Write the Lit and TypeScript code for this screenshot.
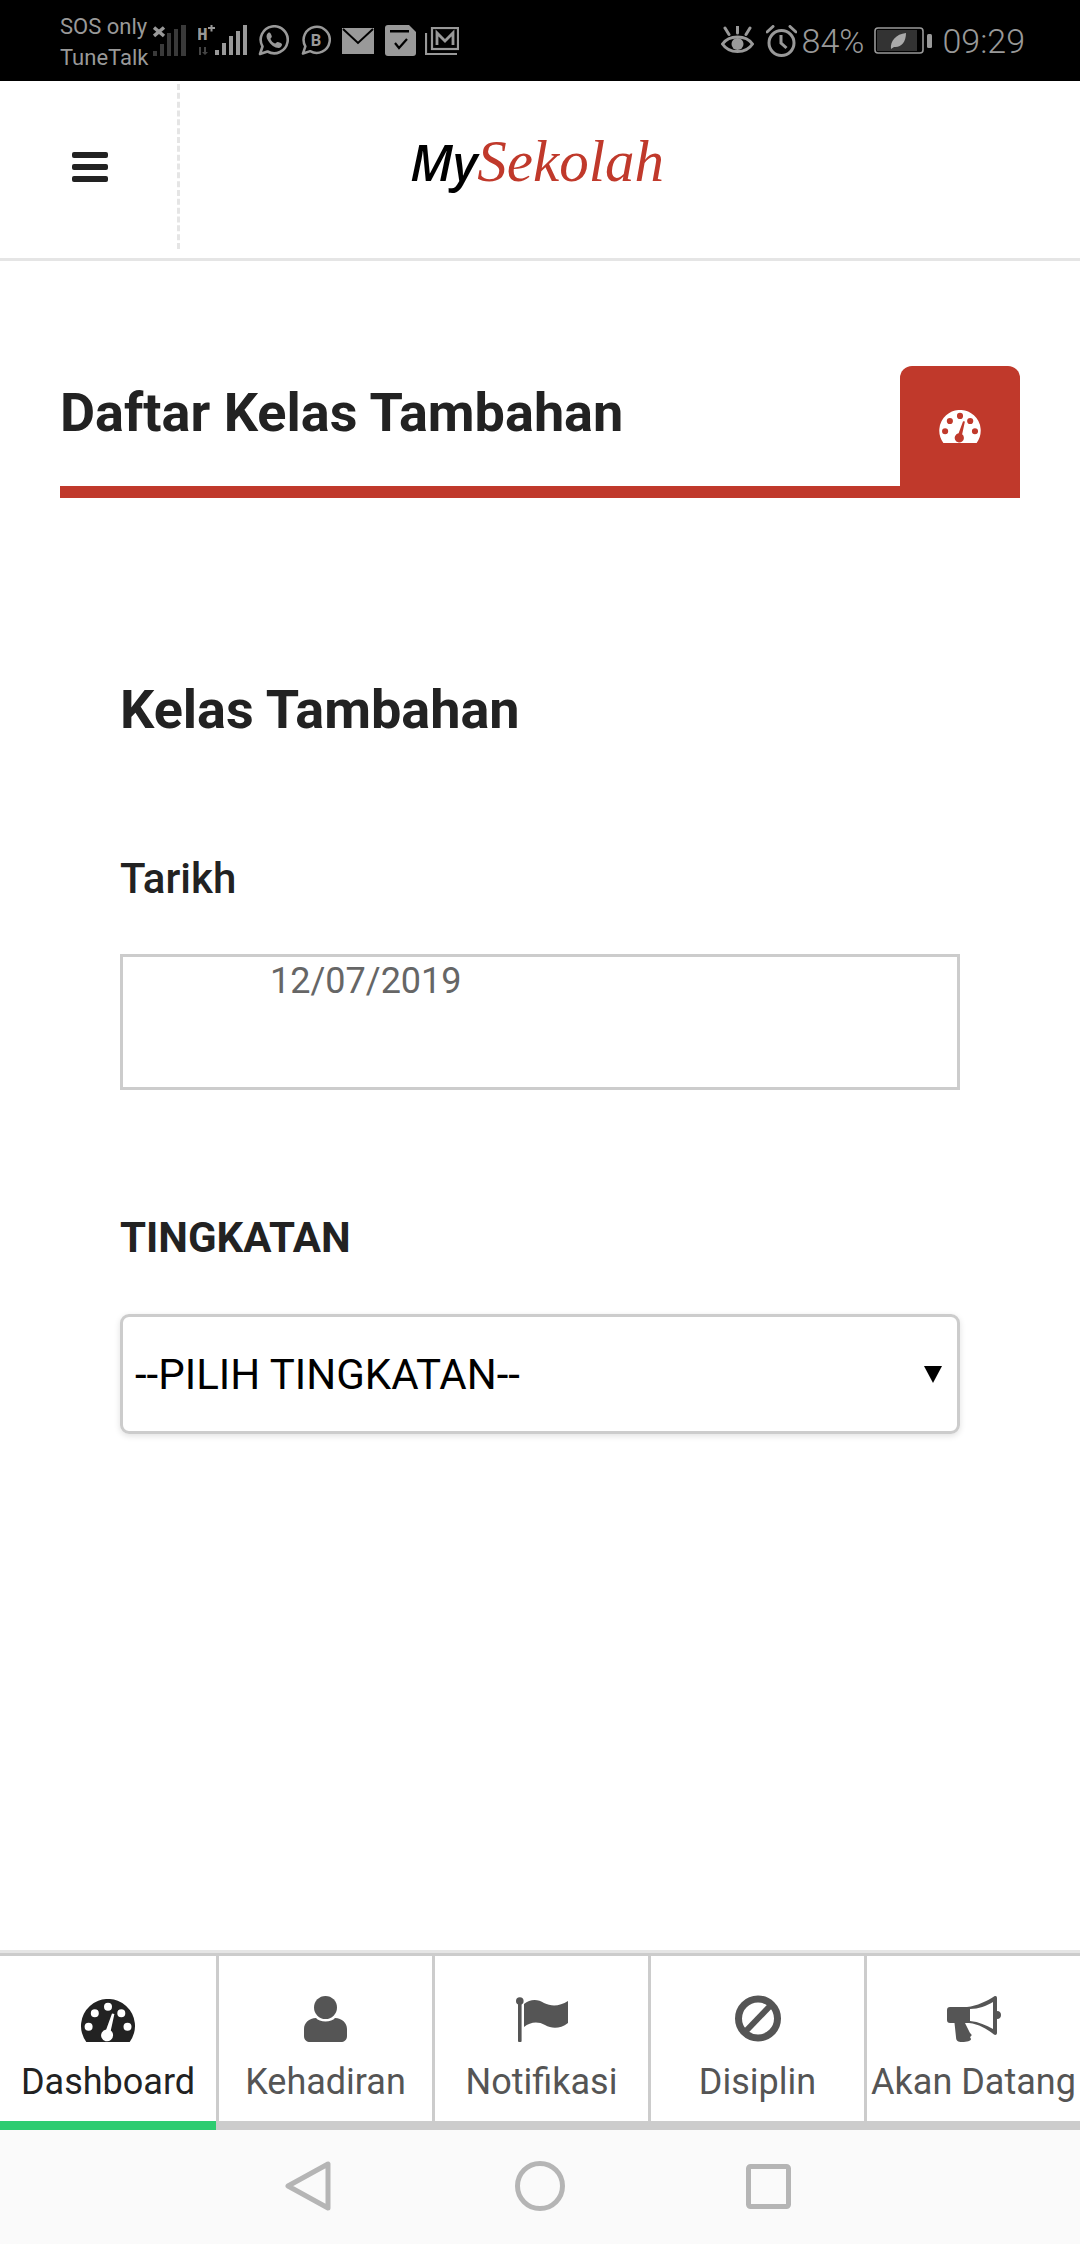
import { LitElement, html, css } from "lit";
import { customElement } from "lit/decorators.js";

const gauge = (w: number, h: number) => html`<svg width=${w} height=${h} viewBox="0 0 54 43" fill="currentColor"><path fill-rule="evenodd" d="M5.3 43A27 27 0 1 1 48.7 43ZM27 3.7a4 4 0 1 0 0 8a4 4 0 1 0 0-8ZM13.8 10.3a4 4 0 1 0 0 8a4 4 0 1 0 0-8ZM40.3 10.3a4 4 0 1 0 0 8a4 4 0 1 0 0-8ZM7.6 23.7a4 4 0 1 0 0 8a4 4 0 1 0 0-8ZM46.5 23.7a4 4 0 1 0 0 8a4 4 0 1 0 0-8ZM31 14.5L25.2 30.4a6 6 0 1 0 4.6 1.2L33.4 15Z"/></svg>`;

const tabs = [
  { label: "Dashboard", icon: gauge(54, 43), active: true },
  { label: "Kehadiran", icon: html`<svg width="43" height="46" viewBox="0 0 43 46" fill="currentColor"><circle cx="21.5" cy="11.5" r="11.5"/><path d="M12 22C15 26.500 28 26.500 31 22C38 22 43 27 43 33V40C43 44 40 46 37 46H6C3 46 0 44 0 40V33C0 27 5 22 12 22Z"/></svg>` },
  { label: "Notifikasi", icon: html`<svg width="52" height="45" viewBox="0 0 52 45" fill="currentColor"><circle cx="3.800" cy="4" r="3.800"/><rect x="2" y="5" width="3.600" height="40" rx="1"/><path d="M8 7C14 2 22 2 28 6C36 10 44 9 52 4V26C44 32 36 32 29 28C22 24 14 25 8 30Z"/></svg>` },
  { label: "Disiplin", icon: html`<svg width="46" height="47" viewBox="0 0 46 47" fill="none" stroke="currentColor"><circle cx="23" cy="23.500" r="19.500" stroke-width="7"/><path d="M10 37L36 10" stroke-width="6"/></svg>` },
  { label: "Akan Datang", icon: html`<svg width="54" height="46" viewBox="0 0 54 46" fill="currentColor"><path fill-rule="evenodd" d="M3 11H20C30 10 40 5 47 0.500C49 -0.500 50 0.500 50 2V15C53 15 54 17 54 19C54 21 53 23 50 23V37C50 39 48 39.500 47 38.500C40 33 32 28 22 27H18L23 37C24 38 26 39 23 41L24 43C24 45 20 46 15 46C11 46 9 45 9 41L7.500 27H3C1 27 0 26 0 24V14C0 12 1 11 3 11ZM23 13V25C32 26 39 29 46 33V6C39 10 32 13 23 13Z"/></svg>` },
];

const gray = "#999";

const statusLeft = [
  { cls: "g7", icon: html`<svg width="33" height="32" viewBox="0 0 33 32"><g fill="#3a3a3a"><rect x="0" y="26" width="4" height="5"/><rect x="7" y="19" width="4" height="12"/><rect x="14" y="8" width="4" height="23"/><rect x="21" y="4" width="4" height="27"/><rect x="28" y="0" width="5" height="31"/></g><path d="M1 2.500L11 11M11 2.500L1 11" stroke="${gray}" stroke-width="3.500"/></svg>` },
  { cls: "g12", icon: html`<svg width="49" height="32" viewBox="0 0 49 32"><g fill="${gray}"><text x="-1" y="15" class="hplus">H</text><rect x="10" y="2" width="7" height="2"/><rect x="12.500" y="0" width="2" height="6.500"/><rect x="17" y="25" width="4" height="5"/><rect x="24" y="18" width="4" height="12"/><rect x="31" y="11" width="4" height="19"/><rect x="38" y="6" width="4" height="24"/><rect x="45" y="0" width="4" height="30"/></g><g fill="#444"><rect x="1" y="22" width="2" height="8"/><path d="M6 22h2v5h2l-3 3-3-3h2z"/></g></svg>` },
  { cls: "g11", icon: html`<svg width="31" height="31" viewBox="0 0 31 31"><path d="M2 29L4.500 21.500A13.500 13.500 0 1 1 9.500 26.500Z" fill="none" stroke="${gray}" stroke-width="2.600" stroke-linejoin="round"/><path d="M10 8C8 10 8 12 10 15.500C12.500 20 17 23 20.500 23C22.500 23 24 21 24 19.500C24 18 20.500 17 19.500 17C18.500 17 18 18.500 17 18.500C15 18 13 15.500 12.500 14C12.500 13 14 12.500 13.800 11.500C13.500 10 12.500 7.500 11.500 7.500C11 7.500 10.500 7.500 10 8Z" fill="${gray}"/></svg>` },
  { cls: "g12", icon: html`<svg width="30" height="31" viewBox="0 0 31 31"><path d="M2 29L4.500 21.500A13.500 13.500 0 1 1 9.500 26.500Z" fill="none" stroke="${gray}" stroke-width="2.600" stroke-linejoin="round"/><text x="15.500" y="21" class="biz" text-anchor="middle" fill="${gray}">B</text></svg>` },
  { cls: "g11", icon: html`<svg width="32" height="26" viewBox="0 0 32 26"><rect width="32" height="26" fill="${gray}"/><path d="M1 1L16 15L31 1" fill="none" stroke="#000" stroke-width="2"/></svg>` },
  { cls: "g11", icon: html`<svg width="31" height="31" viewBox="0 0 31 31"><path d="M3 0H24L31 7V28C31 30 30 31 28 31H3C1 31 0 30 0 28V3C0 1 1 0 3 0Z" fill="${gray}"/><rect x="5" y="5" width="19" height="2.500" fill="#000"/><path d="M10 18L14 23L22 14" fill="none" stroke="#000" stroke-width="2.200"/></svg>` },
  { cls: "g9", icon: html`<svg width="34" height="28" viewBox="0 0 34 28" fill="none" stroke="${gray}" stroke-width="2.200"><path d="M1 6V27H32"/><rect x="7" y="1" width="26" height="21"/><path d="M12 18V6L20 14L28 6V18" stroke-width="2.800"/></svg>` },
];

@customElement("app-root")
export class AppRoot extends LitElement {
  static styles = css`
    :host {
      display: flex;
      flex-direction: column;
      width: 1080px;
      height: 2244px;
      background: #fff;
      color: #222;
      font-family: Roboto, "Liberation Sans", sans-serif;
      overflow: hidden;
    }
    .status {
      flex: none;
      height: 81px;
      background: #000;
      color: #999;
      display: flex;
      align-items: center;
      justify-content: space-between;
      padding: 0 55px 0 60px;
    }
    .status svg { display: block; flex: none; }
    .sgroup { display: flex; align-items: center; }
    .carrier {
      width: 86px;
      font-size: 22px;
      line-height: 31px;
      white-space: nowrap;
      font-weight: 400;
      margin-top: 2px;
    }
    .g5 { margin-left: 5px; }
    .g7 { margin-left: 7px; }
    .g9 { margin-left: 9px; }
    .g10 { margin-left: 10px; }
    .g11 { margin-left: 11px; }
    .g12 { margin-left: 12px; }
    .hplus { font: 700 18px "Liberation Mono", monospace; }
    .biz { font: 700 17px Roboto, sans-serif; }
    .stext { font-size: 34px; font-weight: 300; line-height: 40px; white-space: nowrap; }
    .header {
      flex: none;
      height: 180px;
      box-sizing: border-box;
      padding-top: 3px;
      border-bottom: 3px solid #e5e5e5;
      display: flex;
    }
    .menu {
      flex: none;
      box-sizing: border-box;
      width: 180px;
      height: 165px;
      border-right: 3px dashed #e5e5e5;
      padding-left: 72px;
      display: flex;
      flex-direction: column;
      justify-content: center;
      gap: 6px;
      margin-bottom: 10px;
    }
    .menu i { display: block; width: 36px; height: 6px; border-radius: 2px; background: #222; }
    .logo {
      flex: 1;
      display: flex;
      align-items: baseline;
      justify-content: center;
      padding: 42px 186px 0 0;
      font-family: "Liberation Serif", serif;
      font-style: italic;
      font-size: 59px;
      line-height: 70px;
      color: #c0392b;
    }
    .logo b { font: italic 600 50px "Open Sans", sans-serif; color: #000; }
    .main { flex: 1; display: flex; flex-direction: column; padding: 105px 60px 0; }
    .title {
      display: flex;
      justify-content: space-between;
      align-items: flex-start;
      border-bottom: 12px solid #c0392b;
    }
    .title h1 { margin: 0; padding-top: 19px; font-size: 54px; line-height: 56px; font-weight: 700; }
    .badge {
      width: 120px;
      height: 120px;
      background: #c0392b;
      border-radius: 12px 12px 0 0;
      color: #fff;
      display: flex;
      justify-content: center;
      padding-top: 44px;
      box-sizing: border-box;
    }
    .badge svg { display: block; }
    .form { padding: 184px 60px 0; }
    .form h2 { margin: 0; font-size: 54px; line-height: 56px; font-weight: 700; }
    .lbl { font-size: 42px; line-height: 48px; font-weight: 500; margin-top: 117px; }
    .input {
      margin-top: 51px;
      box-sizing: border-box;
      height: 136px;
      border: 3px solid #ccc;
      padding: 0 0 0 147px;
      font-size: 36px;
      line-height: 48px;
      color: #666;
    }
    .lbl2 { font-size: 42px; line-height: 48px; font-weight: 700; margin-top: 124px; }
    .select {
      margin-top: 52px;
      box-sizing: border-box;
      height: 120px;
      border: 3px solid #ccc;
      border-radius: 9px;
      box-shadow: 0 2px 6px rgba(0,0,0,.12);
      display: flex;
      align-items: center;
      justify-content: space-between;
      padding: 0 15px 0 12px;
      font-size: 42px;
      color: #000;
    }
    .select svg { display: block; }
    .tabs {
      flex: none;
      display: grid;
      grid-template-columns: repeat(5, 216px);
      border-top: 3px solid #e5e5e5;
    }
    .tab {
      box-sizing: border-box;
      height: 177px;
      border-top: 3px solid #ccc;
      border-left: 3px solid #ccc;
      border-bottom: 9px solid #ccc;
      display: flex;
      flex-direction: column;
      align-items: center;
      color: #555;
      padding-top: 40px;
    }
    .tab.first { border-left: none; }
    .tab.active { color: #222; border-bottom-color: #2ecc71; }
    .icon { height: 46px; display: flex; align-items: flex-end; }
    .icon svg { display: block; }
    .tab span { font-size: 36px; line-height: 42px; margin-top: 19px; white-space: nowrap; }
    .nav {
      flex: none;
      height: 114px;
      background: #fafafa;
      display: flex;
      align-items: center;
      padding: 0 0 2px 285px;
      box-sizing: border-box;
    }
    .nav svg { display: block; flex: none; }
    .nav .n2 { margin-left: 184px; }
    .nav .n3 { margin-left: 181px; }
  `;

  render() {
    return html`
      <div class="status">
        <div class="sgroup">
          <div class="carrier">SOS only<br />TuneTalk</div>
          ${statusLeft.map((s) => html`<div class=${s.cls}>${s.icon}</div>`)}
        </div>
        <div class="sgroup">
          <svg width="33" height="29" viewBox="0 0 33 29" fill="none" stroke="#999" stroke-width="3">
            <path d="M1.500 18C8 8.500 25 8.500 31.500 18C25 28 8 28 1.500 18Z" />
            <circle cx="16.500" cy="18" r="6" fill="#999" stroke="none" />
            <path d="M16.500 0V7M4 2L8 8.500M29 2L25 8.500" stroke-linecap="round" />
          </svg>
          <svg class="g12" width="31" height="32" viewBox="0 0 31 32" fill="none" stroke="#999" stroke-width="3">
            <circle cx="15.500" cy="18" r="12.500" />
            <path d="M15 10V18L20.500 23" />
            <path d="M1 7L7 1.500M30 7L24 1.500" stroke-linecap="round" />
          </svg>
          <div class="stext g5">84%</div>
          <svg class="g10" width="58" height="27" viewBox="0 0 58 27">
            <rect x="1" y="1" width="48" height="25" rx="3" fill="none" stroke="#999" stroke-width="1.600" />
            <rect x="3" y="3" width="40" height="21" fill="#333" />
            <rect x="53" y="7" width="5" height="14" rx="1.500" fill="#999" />
            <path d="M17 22C16 14 22 7 32 6C32 15 27 21 20 20L17 22Z" fill="#aaa" />
          </svg>
          <div class="stext g10">09:29</div>
        </div>
      </div>
      <div class="header">
        <div class="menu"><i></i><i></i><i></i></div>
        <div class="logo"><b>My</b>Sekolah</div>
      </div>
      <div class="main">
        <div class="title">
          <h1>Daftar Kelas Tambahan</h1>
          <div class="badge">${gauge(42, 33)}</div>
        </div>
        <div class="form">
          <h2>Kelas Tambahan</h2>
          <div class="lbl">Tarikh</div>
          <div class="input">12/07/2019</div>
          <div class="lbl2">TINGKATAN</div>
          <div class="select">
            <span>--PILIH TINGKATAN--</span>
            <svg width="18" height="17" viewBox="0 0 18 17"><path d="M0 0H18L9 17Z" fill="#000" /></svg>
          </div>
        </div>
      </div>
      <div class="tabs">
        ${tabs.map(
          (t, i) => html`<div class="tab ${i === 0 ? "first" : ""} ${t.active ? "active" : ""}">
            <div class="icon">${t.icon}</div>
            <span>${t.label}</span>
          </div>`
        )}
      </div>
      <div class="nav">
        <svg width="46" height="50" viewBox="0 0 46 50" fill="none" stroke="#b5b5b5" stroke-width="5" stroke-linejoin="round">
          <path d="M43 3V47L3 25Z" />
        </svg>
        <svg class="n2" width="50" height="50" viewBox="0 0 50 50" fill="none" stroke="#b5b5b5" stroke-width="5">
          <circle cx="25" cy="25" r="22.500" />
        </svg>
        <svg class="n3" width="45" height="45" viewBox="0 0 45 45" fill="none" stroke="#b5b5b5" stroke-width="5" stroke-linejoin="round">
          <rect x="2.500" y="2.500" width="40" height="40" rx="2" />
        </svg>
      </div>
    `;
  }
}
